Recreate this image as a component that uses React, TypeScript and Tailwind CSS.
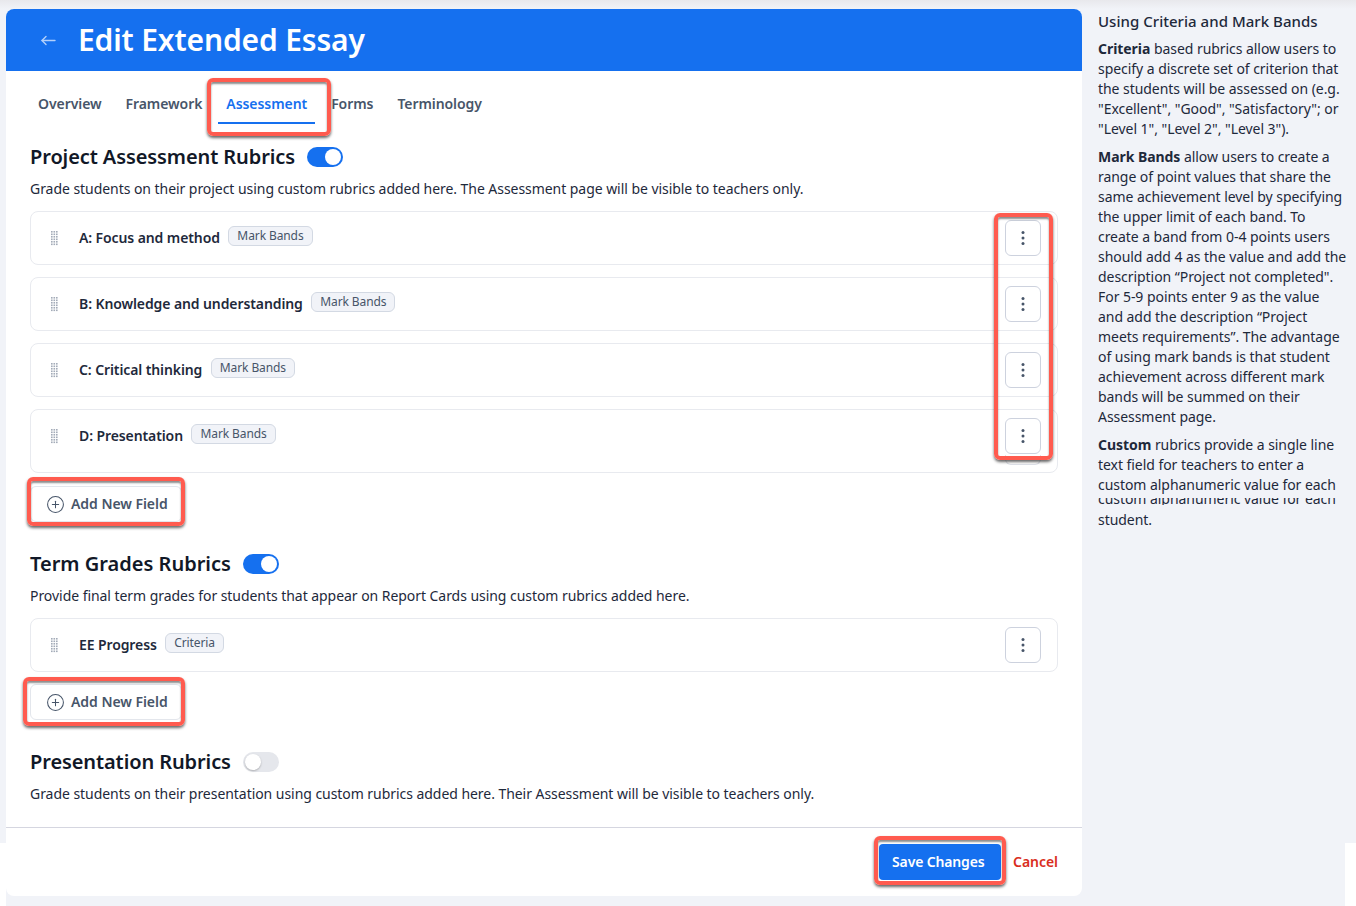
import { CirclePlus } from 'lucide-react'

const projectRows = [
  { label: 'A: Focus and method', badge: 'Mark Bands', rowClass: 'h-[54px]' },
  { label: 'B: Knowledge and understanding', badge: 'Mark Bands', rowClass: 'h-[54px]' },
  { label: 'C: Critical thinking', badge: 'Mark Bands', rowClass: 'h-[54px]' },
  { label: 'D: Presentation', badge: 'Mark Bands', rowClass: 'h-[64px]' },
]

const tabs = ['Overview', 'Framework', 'Assessment', 'Forms', 'Terminology']

function BackArrow() {
  return (
    <svg width="15" height="11" viewBox="0 0 15 11" fill="none" stroke="#b3d0fb" strokeWidth="1.4" strokeLinecap="round" strokeLinejoin="round">
      <path d="M1 5.5h13" />
      <path d="M5 1.5 1 5.5l4 4" />
    </svg>
  )
}

function GripIcon() {
  const dots = []
  for (let row = 0; row < 6; row++) {
    for (let col = 0; col < 3; col++) {
      dots.push(<rect key={`${row}-${col}`} x={col * 2.5} y={row * 2.5} width="1.6" height="1.6" fill="#a3abb8" />)
    }
  }
  return (
    <svg width="7" height="15" viewBox="0 0 7 15">
      {dots}
    </svg>
  )
}

function KebabButton() {
  return (
    <button className="flex h-[36px] w-[36px] shrink-0 items-center justify-center rounded-md border border-[#cdd2de] bg-white">
      <svg width="4" height="16" viewBox="0 0 4 16" fill="#475569">
        <circle cx="2" cy="2.5" r="1.5" />
        <circle cx="2" cy="8" r="1.5" />
        <circle cx="2" cy="13.5" r="1.5" />
      </svg>
    </button>
  )
}

function Toggle({ on }: { on: boolean }) {
  return (
    <span className={`flex h-[20px] w-[36px] items-center rounded-full p-[2px] ${on ? 'justify-end bg-[#1570ef]' : 'justify-start bg-[#e5e7ec]'}`}>
      <span className={`h-[16px] w-[16px] rounded-full bg-white ${on ? '' : 'shadow-[0_1px_2px_rgba(0,0,0,0.25)]'}`} />
    </span>
  )
}

function RubricRow({ label, badge, rowClass }: { label: string; badge: string; rowClass: string }) {
  return (
    <div className={`flex items-start rounded-lg border border-[#e8eaef] pl-[20px] pr-[16px] pt-[8px] ${rowClass}`}>
      <span className="mt-[11px] flex w-[28px] shrink-0">
        <GripIcon />
      </span>
      <span className="mt-[8px] text-sm leading-[20px] font-semibold tracking-[-0.1px] text-[#1e293b]">{label}</span>
      <span className="mt-[6px] ml-[8.5px] flex h-[20px] items-center rounded-md border border-[#d3d9e3] bg-[#f1f3f8] px-[8px] text-xs tracking-[-0.1px] text-[#475569]">
        {badge}
      </span>
      <span className="flex-1" />
      <KebabButton />
    </div>
  )
}

function AddFieldButton({ className }: { className: string }) {
  return (
    <button className={`flex h-[36px] w-[152px] items-center gap-[6px] rounded-md border border-[#e3e6ec] bg-white pl-[15px] text-sm font-semibold tracking-[-0.05px] text-[#475569] ${className}`}>
      <CirclePlus size={19} strokeWidth={1.3} />
      Add New Field
    </button>
  )
}

function SectionHead({ title, on, text, titleClass }: { title: string; on: boolean; text: string; titleClass: string }) {
  return (
    <>
      <div className="flex h-[28px] items-center gap-[12px]">
        <h2 className={`text-xl leading-[28px] font-semibold text-[#111827] ${titleClass}`}>{title}</h2>
        <Toggle on={on} />
      </div>
      <p className="mt-[8px] text-sm leading-[20px] tracking-[-0.05px] text-[#1e293b]">{text}</p>
    </>
  )
}

function Callout({ className }: { className: string }) {
  return (
    <div className={`pointer-events-none absolute rounded-[6px] border-4 border-[#ff5b4f] shadow-[0_2px_3px_rgba(0,0,0,0.6),inset_0_2px_2px_rgba(0,0,0,0.45)] ${className}`} />
  )
}

export default function App() {
  return (
    <div className="relative h-[906px] w-[1356px] overflow-hidden bg-[#f1f3f8] font-['Noto_Sans',sans-serif]">
      <div className="absolute top-0 left-0 h-[9px] w-full bg-linear-to-b from-[#e8e8ec] to-[#f1f3f8]" />

      <div className="relative flex items-start pt-[9px] pl-[6px]">
        {/* Main card */}
        <main className="flex h-[887px] w-[1076px] shrink-0 flex-col rounded-lg bg-white">
          <header className="flex h-[62px] items-center rounded-t-lg bg-[#1570ef] pl-[35px] text-white">
            <BackArrow />
            <h1 className="ml-[22px] text-[30px] leading-[36px] font-semibold tracking-[-0.15px]">Edit Extended Essay</h1>
          </header>

          <div className="flex-1 px-[24px]">
            <nav className="mt-[14px] flex gap-[8px]">
              {tabs.map((tab) => (
                <span
                  key={tab}
                  className={`flex h-[39px] items-center border-b-2 px-[8px] text-sm font-semibold tracking-[-0.07px] ${
                    tab === 'Assessment' ? 'border-[#1570ef] text-[#1570ef]' : 'border-transparent text-[#475569]'
                  }`}
                >
                  {tab}
                </span>
              ))}
            </nav>

            <section className="mt-[19px]">
              <SectionHead
                title="Project Assessment Rubrics"
                titleClass="tracking-[-0.1px]"
                on
                text="Grade students on their project using custom rubrics added here. The Assessment page will be visible to teachers only."
              />
              <div className="mt-[12px] flex flex-col gap-[12px]">
                {projectRows.map((row) => (
                  <RubricRow key={row.label} {...row} />
                ))}
              </div>
              <AddFieldButton className="mt-[13px]" />
            </section>

            <section className="mt-[28px]">
              <SectionHead
                title="Term Grades Rubrics"
                titleClass="tracking-normal"
                on
                text="Provide final term grades for students that appear on Report Cards using custom rubrics added here."
              />
              <div className="mt-[12px]">
                <RubricRow label="EE Progress" badge="Criteria" rowClass="h-[54px]" />
              </div>
              <AddFieldButton className="mt-[12px]" />
            </section>

            <section className="mt-[28px]">
              <SectionHead
                title="Presentation Rubrics"
                titleClass="tracking-[-0.1px]"
                on={false}
                text="Grade students on their presentation using custom rubrics added here. Their Assessment will be visible to teachers only."
              />
            </section>
          </div>

          <footer className="flex h-[69px] items-center justify-end gap-[12px] border-t border-[#d5d6e0] pr-[24px] pb-[1px]">
            <button className="h-[36px] w-[122px] rounded-sm bg-[#1570ef] pl-[13px] text-left text-sm font-semibold tracking-[-0.15px] text-white">Save Changes</button>
            <button className="text-sm font-semibold tracking-[-0.05px] text-[#d92d20]">Cancel</button>
          </footer>
        </main>

        {/* Help sidebar */}
        <aside className="box-content w-[249px] shrink-0 pl-[16px] text-sm leading-[20px] tracking-[-0.05px] text-[#1e293b]">
          <h3 className="mt-[2px] text-[15px] leading-[20px] font-medium tracking-[0.03px]">Using Criteria and Mark Bands</h3>
          <p className="mt-[8px]">
            <b className="font-bold">Criteria</b> based rubrics allow users to specify a discrete set of criterion that the students will be assessed on (e.g.
            "Excellent", "Good", "Satisfactory"; or "Level 1", "Level 2", "Level 3").
          </p>
          <p className="mt-[8px]">
            <b className="font-bold">Mark Bands</b> allow users to create a range of point values that share the same achievement level by specifying the upper
            limit of each band. To create a band from 0-4 points users should add 4 as the value and add the description “Project not completed". For 5-9 points
            enter 9 as the value and add the description “Project meets requirements”. The advantage of using mark bands is that student achievement across
            different mark bands will be summed on their Assessment page.
          </p>
          <p className="mt-[8px]">
            <b className="font-bold">Custom</b> rubrics provide a single line text field for teachers to enter a custom alphanumeric value for each
          </p>
          {/* doubled line left over from the capture */}
          <div className="mt-[3px] h-[7px] overflow-hidden">
            <p className="-mt-[9px]">custom alphanumeric value for each</p>
          </div>
          <p className="mt-[5px]">student.</p>
        </aside>
      </div>

      {/* White patches around the card edges */}
      <div className="absolute top-[843px] left-0 h-[63px] w-[6px] bg-white" />
      <div className="absolute top-[843px] left-[1345px] h-[63px] w-[11px] bg-white" />

      {/* Stray button edge below the last kebab, mostly hidden by the annotation */}
      <div className="absolute top-[455px] left-[1005px] h-[10px] w-[36px] rounded-b-md border border-t-0 border-[#e0e3ea]" />

      {/* Annotation boxes */}
      <Callout className="top-[78px] left-[207px] h-[58px] w-[124px]" />
      <Callout className="top-[213px] left-[994px] h-[247px] w-[59px]" />
      <Callout className="top-[477px] left-[27px] h-[49px] w-[158px]" />
      <Callout className="top-[677px] left-[23px] h-[49px] w-[162px]" />
      <Callout className="top-[836px] left-[874px] h-[49px] w-[132px]" />
    </div>
  )
}
